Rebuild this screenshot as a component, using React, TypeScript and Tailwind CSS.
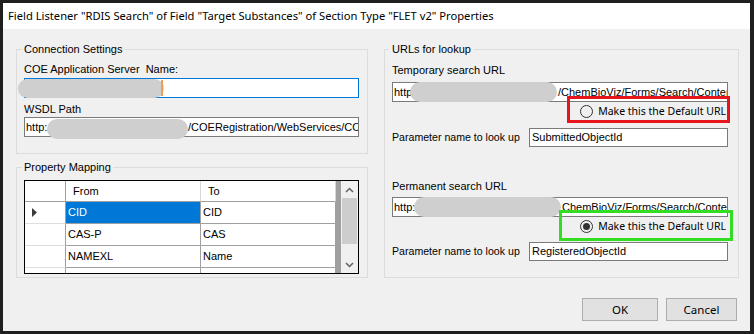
import React from "react";

const sans = "font-['Liberation_Sans',Arial,sans-serif]";
const ui = "font-['Noto_Sans','Liberation_Sans',sans-serif]";

function Blob({ className }: { className: string }) {
  return <div className={`absolute rounded-full bg-[#cfcfd0] ${className}`} />;
}

function Radio({ checked }: { checked?: boolean }) {
  return (
    <div className="flex items-center justify-end pr-[2px] h-[18px] gap-[5px]">
      <span className="w-[13px] h-[13px] rounded-full border border-[#333333] flex items-center justify-center">
        {checked && <span className="w-[7px] h-[7px] rounded-full bg-[#333333]" />}
      </span>
      <span className={`${ui} text-[10.5px] leading-[16px] text-black whitespace-nowrap`}>Make this the Default URL</span>
    </div>
  );
}

function ParamRow({ value, className }: { value: string; className: string }) {
  return (
    <div className={`flex items-center ${className}`}>
      <span className="w-[137px] text-[10.6px] leading-[13px] whitespace-nowrap">Parameter name to look up</span>
      <div className="w-[199px] h-[19px] bg-white border border-[#7a7a7a] flex items-center pl-[2px] text-[11px] overflow-hidden whitespace-nowrap">
        {value}
      </div>
    </div>
  );
}

function Chevron({ up }: { up?: boolean }) {
  return (
    <svg width="9" height="6" viewBox="0 0 9 6">
      <path d={up ? "M1 5 L4.5 1.5 L8 5" : "M1 1 L4.5 4.5 L8 1"} stroke="#606060" strokeWidth="1.5" fill="none" />
    </svg>
  );
}

function DataRow({ from, to, selected, current }: { from: string; to: string; selected?: boolean; current?: boolean }) {
  return (
    <div className="flex h-[22px] shrink-0">
      <div className="w-[41px] bg-white border-r border-r-[#a0a0a0] border-b border-b-[#dedede] flex items-center pl-[7px]">
        {current && (
          <svg width="5" height="9" viewBox="0 0 5 9">
            <path d="M0 0 L5 4.5 L0 9Z" fill="#3c3c3c" />
          </svg>
        )}
      </div>
      <div
        className={`w-[135px] border-r border-b border-[#a0a0a0] flex items-center pl-[2px] ${
          selected ? "bg-[#0078d7] text-white" : "bg-white"
        }`}
      >
        {from}
      </div>
      <div className="w-[135px] bg-white border-r border-b border-[#a0a0a0] flex items-center pl-[2px]">{to}</div>
    </div>
  );
}

export default function App() {
  return (
    <div className={`w-[754px] h-[334px] bg-[#1f1f1f] pt-[3px] pl-[3px] pr-[4px] pb-[3px] relative overflow-hidden ${sans} text-[11px] text-black`}>
      <div className="flex flex-col h-full">
        <div className={`h-[26px] bg-white flex items-center pl-[5px] ${ui} text-[11.2px] whitespace-nowrap`}>
          Field Listener "RDIS Search" of Field "Target Substances" of Section Type "FLET v2" Properties
        </div>
        <div className="flex-1 bg-[#f0f0f0] flex flex-col pt-[13px] pl-[13px] pr-[11px]">
          <div className="flex gap-[16px]">
            {/* Left column */}
            <div className="w-[352px] min-w-0 flex flex-col gap-[6px]">
              <fieldset className="min-w-0 h-[112px] border border-[#dcdcdc] pl-[7px] pr-[8px]">
                <legend className="-ml-[2px] px-[2px] leading-[14px]">Connection Settings</legend>
                <div className="mt-[7px] leading-[13px]">COE Application Server&nbsp; Name:</div>
                <div className="relative mt-[2px]">
                  <div className="h-[20px] bg-white border border-[#0078d7]" />
                  <Blob className="left-[-6px] top-[1px] w-[146px] h-[19px]" />
                  <div className="absolute left-[137px] top-[2px] w-[2px] h-[16px] bg-[#f0a050]" />
                </div>
                <div className="mt-[5px] leading-[13px]">WSDL Path</div>
                <div className="relative mt-[1px]">
                  <div className="h-[20px] bg-white border border-[#7a7a7a] flex items-center pl-[1px] overflow-hidden whitespace-nowrap">
                    <span className="w-[162px] shrink-0">http://</span>
                    <span>/COERegistration/WebServices/COERegistrationServices.asmx</span>
                  </div>
                  <Blob className="left-[23px] top-[2px] w-[141px] h-[20px]" />
                </div>
              </fieldset>
              <fieldset className="min-w-0 h-[118px] border border-[#dcdcdc] pl-[7px] pr-[8px]">
                <legend className="-ml-[2px] px-[2px] leading-[14px]">Property Mapping</legend>
                <div className="mt-[6px] h-[94px] border border-black bg-[#a0a0a0] flex overflow-hidden">
                  <div className="w-[311px] flex flex-col">
                    <div className="flex h-[21px] shrink-0">
                      <div className="w-[41px] bg-white border-r border-r-[#a0a0a0] border-b border-b-[#a0a0a0]" />
                      <div className="w-[135px] bg-white border-r border-r-[#d8d8d8] border-b border-b-[#a0a0a0] flex items-center pl-[7px]">
                        From
                      </div>
                      <div className="w-[135px] bg-white border-r border-r-[#d8d8d8] border-b border-b-[#a0a0a0] flex items-center pl-[7px]">
                        To
                      </div>
                    </div>
                    <DataRow from="CID" to="CID" selected current />
                    <DataRow from="CAS-P" to="CAS" />
                    <DataRow from="NAMEXL" to="Name" />
                    <DataRow from="" to="" />
                  </div>
                  <div className="w-[5px]" />
                  <div className="w-[17px] bg-[#f0f0f0] flex flex-col">
                    <div className="h-[17px] flex items-center justify-center">
                      <Chevron up />
                    </div>
                    <div className="mx-[1px] h-[46px] bg-[#cdcdcd]" />
                    <div className="flex-1" />
                    <div className="h-[17px] flex items-center justify-center">
                      <Chevron />
                    </div>
                  </div>
                </div>
              </fieldset>
            </div>
            {/* Right column */}
            <fieldset className="w-[355px] min-w-0 h-[236px] border border-[#dcdcdc] pl-[7px] pr-[10px]">
              <legend className="-ml-[3px] px-[3px] leading-[14px]">URLs for lookup</legend>
              <div className="mt-[8px] leading-[13px]">Temporary search URL</div>
              <div className="relative mt-[5px]">
                <div className="h-[20px] bg-white border border-[#7a7a7a] flex items-center pl-[1px] overflow-hidden whitespace-nowrap">
                  <span className="w-[164px] shrink-0">http://</span>
                  <span>/ChemBioViz/Forms/Search/ContentArea/ChemBioVizSearch.aspx</span>
                </div>
                <Blob className="left-[18px] top-[0px] w-[147px] h-[20px]" />
              </div>
              <Radio />
              <ParamRow value="SubmittedObjectId" className="mt-[8px]" />
              <div className="mt-[33px] leading-[13px]">Permanent search URL</div>
              <div className="relative mt-[4px]">
                <div className="h-[20px] bg-white border border-[#7a7a7a] flex items-center pl-[1px] overflow-hidden whitespace-nowrap">
                  <span className="w-[168px] shrink-0">http://</span>
                  <span>ChemBioViz/Forms/Search/ContentArea/ChemBioVizSearch.aspx</span>
                </div>
                <Blob className="left-[22px] top-[0px] w-[147px] h-[20px]" />
              </div>
              <Radio checked />
              <ParamRow value="RegisteredObjectId" className="mt-[7px]" />
            </fieldset>
          </div>
          <div className="flex justify-end gap-[8px] mt-[20px] pr-[2px]">
            <button className={`w-[76px] h-[23px] bg-[#e1e1e1] border border-[#adadad] ${ui} text-[11.5px]`}>OK</button>
            <button className={`w-[71px] h-[23px] bg-[#e1e1e1] border border-[#adadad] ${ui} text-[11.5px]`}>Cancel</button>
          </div>
        </div>
      </div>
      {/* annotation overlays */}
      <div className="absolute left-[567px] top-[96px] w-[163px] h-[27px] border-[3px] border-[#e8141c]" />
      <div className="absolute left-[559px] top-[210px] w-[174px] h-[31px] border-[3px] border-[#33dd22]" />
    </div>
  );
}
